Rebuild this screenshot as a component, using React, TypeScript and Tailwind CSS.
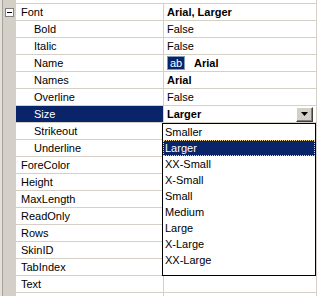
import React from "react"

type Row = {
  name: string
  value?: React.ReactNode
  child?: boolean
  selected?: boolean
}

const rows: Row[] = [
  { name: "Font", value: <span className="font-bold">Arial, Larger</span> },
  { name: "Bold", value: "False", child: true },
  { name: "Italic", value: "False", child: true },
  {
    name: "Name",
    child: true,
    value: (
      <span className="flex items-center">
        <span className="flex h-[14px] w-[18px] items-center justify-center border border-[#7f9db9] bg-[#0a246a] text-white leading-none">
          ab
        </span>
        <span className="ml-[9px] font-bold">Arial</span>
      </span>
    ),
  },
  { name: "Names", value: <span className="font-bold">Arial</span>, child: true },
  { name: "Overline", value: "False", child: true },
  { name: "Size", child: true, selected: true },
  { name: "Strikeout", child: true },
  { name: "Underline", child: true },
  { name: "ForeColor" },
  { name: "Height" },
  { name: "MaxLength" },
  { name: "ReadOnly" },
  { name: "Rows" },
  { name: "SkinID" },
  { name: "TabIndex" },
  { name: "Text" },
  { name: "" },
]

const sizes = [
  "Smaller",
  "Larger",
  "XX-Small",
  "X-Small",
  "Small",
  "Medium",
  "Large",
  "X-Large",
  "XX-Large",
]

function DropButton() {
  return (
    <div className="flex h-[15px] w-[17px] items-center justify-center border border-t-white border-l-white border-r-[#404040] border-b-[#404040] bg-[#d4d0c8] shadow-[inset_-1px_-1px_0_#808080]">
      <svg width="7" height="4" viewBox="0 0 7 4">
        <path d="M0 0h7L3.5 4z" fill="#000" />
      </svg>
    </div>
  )
}

export default function App() {
  return (
    <div
      className="relative h-[296px] w-[319px] overflow-hidden bg-white text-[11px] text-black"
      style={{ fontFamily: '"Liberation Sans", Arial, sans-serif' }}
    >
      <div className="flex h-full">
        {/* gutter */}
        <div className="flex h-full w-[16px] shrink-0 bg-[#d4d0c8]">
          <div className="h-full w-[2px] bg-[#e4e1db]" />
          <div className="h-full w-px bg-[#a8a59e]" />
          <div className="flex-1 pt-[8px]">
            <div className="ml-[2px] flex h-[9px] w-[9px] items-center justify-center border border-[#808080] bg-white">
              <div className="h-px w-[5px] bg-black" />
            </div>
          </div>
        </div>

        {/* grid */}
        <div className="flex h-full w-[300px] flex-col pt-[3px]">
          <div className="border-t border-[#d4d0c8]" />
          {rows.map((r, i) => (
            <div key={i} className="flex h-[17px] shrink-0 border-b border-[#d4d0c8]">
              <div
                className={
                  "flex w-[148px] items-center border-r border-[#d4d0c8] " +
                  (r.child ? "pl-[18px] " : "pl-[5px] ") +
                  (r.selected ? "bg-[#0a246a] text-white" : "")
                }
              >
                {r.name}
              </div>
              <div className="flex flex-1 items-center justify-between pl-[3px] pr-[3px]">
                {r.selected ? (
                  <>
                    <span className="font-bold">Larger</span>
                    <DropButton />
                  </>
                ) : (
                  r.value
                )}
              </div>
            </div>
          ))}
        </div>

        <div className="h-full w-px bg-[#d4d0c8]" />
      </div>

      {/* dropdown list */}
      <div className="absolute left-[162px] top-[123px] h-[153px] w-[154px] border border-black bg-white">
        {sizes.map((s) => (
          <div
            key={s}
            className={
              "flex h-[16px] items-center pl-[2px] " +
              (s === "Larger"
                ? "bg-[#0a246a] text-white outline outline-1 outline-dotted outline-offset-[-1px] outline-[#f5db95]"
                : "")
            }
          >
            {s}
          </div>
        ))}
      </div>
    </div>
  )
}
